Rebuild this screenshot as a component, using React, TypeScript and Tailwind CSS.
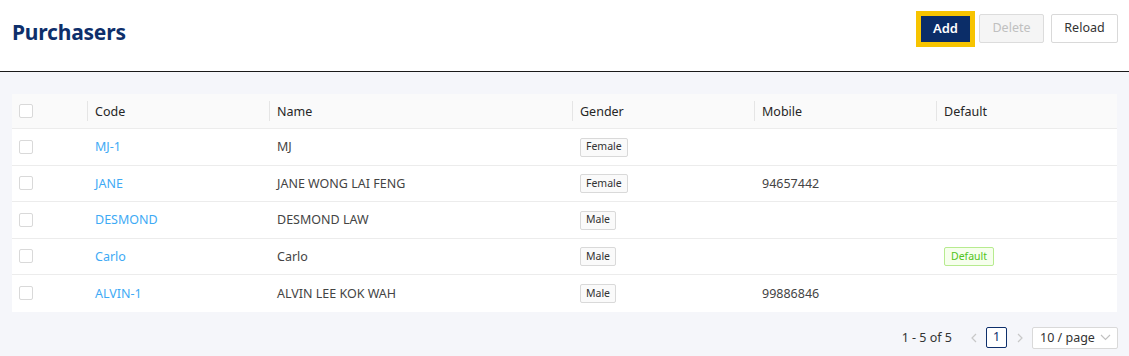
import React from 'react';

type Row = { code: string; name: string; gender: string; mobile: string; isDefault?: boolean };

const rows: Row[] = [
  { code: 'MJ-1', name: 'MJ', gender: 'Female', mobile: '' },
  { code: 'JANE', name: 'JANE WONG LAI FENG', gender: 'Female', mobile: '94657442' },
  { code: 'DESMOND', name: 'DESMOND LAW', gender: 'Male', mobile: '' },
  { code: 'Carlo', name: 'Carlo', gender: 'Male', mobile: '', isDefault: true },
  { code: 'ALVIN-1', name: 'ALVIN LEE KOK WAH', gender: 'Male', mobile: '99886846' },
];

const cols = 'grid grid-cols-[75px_182px_303px_182px_182px_1fr]';

const Checkbox = () => <span className="block w-[14px] h-[14px] rounded-[2px] border border-[#d9d9d9] bg-white" />;

const HeadCell: React.FC<{ label: string }> = ({ label }) => (
  <div className="flex items-center">
    <span className="w-px h-5 bg-[#e5e5e5]" />
    <span className="pl-[7px] pt-[2px]">{label}</span>
  </div>
);

const App: React.FC = () => {
  return (
    <div className="w-[1129px] h-[356px] bg-[#f5f6fa] text-[12.5px] font-['Noto_Sans',sans-serif] overflow-hidden">
      {/* Header */}
      <div className="h-[72px] bg-white border-b border-[#1a1a1a] flex items-start justify-between pl-3 pr-[11px]">
        <h1 className="mt-[17px] text-[21px] font-bold text-[#0e2f6b] tracking-[-0.2px]">Purchasers</h1>
        <div className="flex items-center mt-[14px] h-[29px]">
          <button className="h-[26px] px-[12px] mr-[9px] bg-[#0b2d68] text-white text-[13px] font-semibold ring-[5px] ring-[#f7c400]">
            Add
          </button>
          <button className="h-[29px] w-[65px] mr-[7px] bg-[#f5f5f5] border border-[#dcdcdc] text-[#c0c0c0] rounded-[2px]">
            Delete
          </button>
          <button className="h-[29px] w-[67px] bg-white border border-[#d9d9d9] text-[#333] rounded-[2px]">
            Reload
          </button>
        </div>
      </div>

      {/* Table */}
      <div className="mx-3 mt-[22px] bg-white">
        <div className={`${cols} h-[35px] bg-[#fafafa] border-b border-[#ececec] text-[#262626]`}>
          <div className="flex items-center pl-[7px]">
            <Checkbox />
          </div>
          <HeadCell label="Code" />
          <HeadCell label="Name" />
          <HeadCell label="Gender" />
          <HeadCell label="Mobile" />
          <HeadCell label="Default" />
        </div>
        {rows.map((r, i) => (
          <div
            key={r.code}
            className={`${cols} h-[36.5px] text-[#444] ${i < rows.length - 1 ? 'border-b border-[#ececec]' : ''}`}
          >
            <div className="flex items-center pl-[7px]">
              <Checkbox />
            </div>
            <div className="flex items-center pl-2 pt-[2px] text-[#3eaaf5]">{r.code}</div>
            <div className="flex items-center pl-2 pt-[2px]">{r.name}</div>
            <div className="flex items-center pl-2 pt-[1px]">
              <span className="h-[19px] px-[5px] flex items-center text-[10.5px] text-[#333] bg-[#fafafa] border border-[#d9d9d9] rounded-[2px]">
                {r.gender}
              </span>
            </div>
            <div className="flex items-center pl-2 pt-[2px]">{r.mobile}</div>
            <div className="flex items-center pl-2 pt-[1px]">
              {r.isDefault && (
                <span className="h-[19px] px-[6px] flex items-center text-[10.5px] text-[#52c41a] bg-[#f6ffed] border border-[#b7eb8f] rounded-[2px]">
                  Default
                </span>
              )}
            </div>
          </div>
        ))}
      </div>

      {/* Pagination */}
      <div className="flex items-center justify-end mt-[15px] mr-[11px] text-[#333]">
        <span className="mr-[18px] pt-[2px]">1 - 5 of 5</span>
        <svg width="8" height="10" viewBox="0 0 8 10" className="mr-[8px]">
          <path d="M6 1L2 5l4 4" fill="none" stroke="#c8c8c8" strokeWidth="1.2" />
        </svg>
        <span className="w-[21px] h-[21px] flex items-center justify-center border border-[#0e2f6b] text-[#0e2f6b] rounded-[2px] bg-white">
          1
        </span>
        <svg width="8" height="10" viewBox="0 0 8 10" className="ml-[9px] mr-[8px]">
          <path d="M2 1l4 4-4 4" fill="none" stroke="#c8c8c8" strokeWidth="1.2" />
        </svg>
        <span className="w-[86px] h-[22px] flex items-center justify-between pl-[7px] pr-[6px] bg-white border border-[#d9d9d9] rounded-[2px]">
          <span className="pt-px">10 / page</span>
          <svg width="11" height="7" viewBox="0 0 11 7">
            <path d="M1 1l4.5 4.5L10 1" fill="none" stroke="#c0c0c0" strokeWidth="1.1" />
          </svg>
        </span>
      </div>
    </div>
  );
};

export default App;
